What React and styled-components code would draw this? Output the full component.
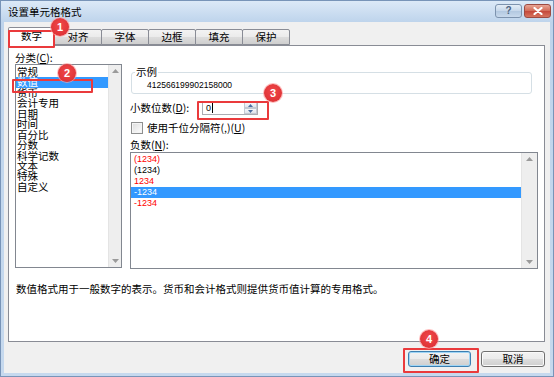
import React from "react";
import styled, { createGlobalStyle } from "styled-components";

const GlobalStyle = createGlobalStyle`
  html, body {
    margin: 0;
    padding: 0;
    background: #fff;
  }
  body {
    font-family: "Noto Sans CJK SC", "Liberation Sans", sans-serif;
    font-size: 10.5px;
    color: #000;
  }
`;

const Window = styled.div`
  position: relative;
  width: 554px;
  height: 377px;
  box-sizing: border-box;
  border: 1px solid #7894b8;
  background: linear-gradient(#dce9f7, #bed4ec 21px, #c6d9ee);
  display: flex;
  flex-direction: column;
`;

const TitleBar = styled.div`
  height: 21px;
  display: flex;
  align-items: center;
  padding: 0 2px 0 7px;
`;

const Title = styled.div`
  flex: 1;
  line-height: 22px;
  font-size: 10.5px;
`;

const CaptionButton = styled.div`
  width: 27px;
  height: 14px;
  box-sizing: border-box;
  border: 1px solid ${(p) => (p.$close ? "#9c4a42" : "#7d93ae")};
  border-radius: 3px;
  margin-left: 2px;
  margin-top: -2px;
  display: flex;
  align-items: center;
  justify-content: center;
  color: ${(p) => (p.$close ? "#fff" : "#4d6380")};
  font-family: "Liberation Sans", sans-serif;
  font-weight: bold;
  font-size: 10px;
  background: ${(p) =>
    p.$close
      ? "linear-gradient(#e8a595, #d26a56 50%, #c4473a 51%, #d6745e)"
      : "linear-gradient(#e4edf7, #c6d7ea 50%, #b2c8e0 51%, #c8d9ec)"};
`;

const Body = styled.div`
  flex: 1;
  margin: 0 3px 3px;
  background: #f0f0f0;
  padding: 5px 5px 0 4px;
  display: flex;
  flex-direction: column;
`;

const Tabs = styled.div`
  display: flex;
  align-items: flex-end;
  height: 18px;
`;

const Tab = styled.div`
  position: relative;
  z-index: ${(p) => (p.$active ? 2 : 1)};
  box-sizing: border-box;
  width: ${(p) => (p.$active ? 47 : 48)}px;
  height: ${(p) => (p.$active ? 19 : 16)}px;
  margin-left: ${(p) => (p.$active ? 0 : -1)}px;
  margin-bottom: ${(p) => (p.$active ? -1 : 0)}px;
  border: 1px solid #898c95;
  border-bottom: ${(p) => (p.$active ? "none" : "1px solid #898c95")};
  border-radius: 2px 2px 0 0;
  background: ${(p) =>
    p.$active ? "#fff" : "linear-gradient(#f3f3f3, #ebebeb 50%, #dddddd 51%, #cfcfcf)"};
  display: flex;
  align-items: center;
  justify-content: center;
  line-height: 12px;
  padding-bottom: ${(p) => (p.$active ? 2 : 0)}px;
`;

const Panel = styled.div`
  width: 537px;
  height: 297px;
  box-sizing: border-box;
  border: 1px solid #898c95;
  background: #fff;
  display: flex;
  flex-direction: column;
`;

const Top = styled.div`
  display: flex;
  gap: 9px;
  padding: 5px 6px 0 6px;
`;

const CategoryCol = styled.div`
  width: 106px;
  display: flex;
  flex-direction: column;
`;

const Label = styled.div`
  line-height: ${(p) => p.$lh || 13}px;
  height: ${(p) => p.$lh || 13}px;
  margin-top: ${(p) => p.$mt || 0}px;
  white-space: nowrap;
  width: ${(p) => (p.$w ? `${p.$w}px` : "auto")};
  flex-shrink: 0;
`;

const ListBox = styled.div`
  box-sizing: border-box;
  width: ${(p) => p.$w}px;
  height: ${(p) => p.$h}px;
  margin-top: ${(p) => p.$mt || 0}px;
  border: 1px solid #828790;
  display: flex;
  background: #fff;
`;

const Items = styled.div`
  flex: 1;
  padding-top: ${(p) => p.$pt}px;
`;

const Item = styled.div`
  line-height: ${(p) => p.$lh}px;
  height: ${(p) => p.$lh}px;
  padding-left: ${(p) => p.$pl}px;
  white-space: nowrap;
  font-family: ${(p) =>
    p.$num ? '"Liberation Sans", sans-serif' : '"Noto Sans CJK SC", sans-serif'};
  font-size: ${(p) => (p.$num ? "9px" : "10.5px")};
  color: ${(p) => (p.$selected ? "#fff" : p.$red ? "#ff0000" : "#000")};
  background: ${(p) => (p.$selected ? "#3399ff" : "transparent")};
`;

const ScrollBar = styled.div`
  width: ${(p) => p.$w}px;
  background: #eeeeee;
  border-left: 1px solid #e4e4e4;
  display: flex;
  flex-direction: column;
  justify-content: space-between;
  align-items: center;
  padding: 4px 0;
`;

const DetailCol = styled.div`
  width: 408px;
  display: flex;
  flex-direction: column;
`;

const GroupBox = styled.div`
  position: relative;
  box-sizing: border-box;
  width: 401px;
  height: 22px;
  margin: 21px 0 0 1px;
  border: 1px solid #d5dfe5;
  border-radius: 3px;
  padding: 6px 0 0 15px;
`;

const Legend = styled.span`
  position: absolute;
  top: -7px;
  left: 3px;
  padding: 0 1px;
  background: #fff;
  line-height: 12px;
`;

const SampleValue = styled.div`
  font-family: "Liberation Sans", sans-serif;
  font-size: 8.5px;
  line-height: 12px;
`;

const Row = styled.div`
  display: flex;
  align-items: center;
  margin-top: ${(p) => p.$mt}px;
  height: ${(p) => p.$h}px;
`;

const Spin = styled.div`
  width: 56px;
  height: 14px;
  box-sizing: border-box;
  border: 1px solid #abadb3;
  border-top-color: #8e9197;
  display: flex;
  margin-left: 1px;
`;

const SpinText = styled.div`
  flex: 1;
  font-family: "Liberation Sans", sans-serif;
  font-size: 9px;
  line-height: 12px;
  padding-left: 3px;
  display: flex;
  align-items: center;
`;

const Caret = styled.span`
  display: inline-block;
  width: 1px;
  height: 10px;
  background: #000;
  margin-left: 1px;
`;

const SpinButtons = styled.div`
  width: 13px;
  display: flex;
  flex-direction: column;
`;

const SpinHalf = styled.div`
  flex: 1;
  box-sizing: border-box;
  border: 1px solid #c3cad3;
  background: linear-gradient(#f6f8fb, #dfe5ed);
  display: flex;
  align-items: center;
  justify-content: center;
`;

const Check = styled.div`
  width: 12px;
  height: 12px;
  box-sizing: border-box;
  border: 1px solid #8e8f8f;
  margin-left: 1px;
  margin-right: 4px;
  background: linear-gradient(135deg, #dcdcdc, #f4f4f4 70%, #fff);
  box-shadow: inset 0 0 0 1px #f4f4f4;
`;

const Description = styled.div`
  margin-top: 13px;
  padding-left: 7px;
  line-height: 13px;
`;

const Footer = styled.div`
  display: flex;
  justify-content: flex-end;
  gap: 10px;
  margin-top: 9px;
`;

const Button = styled.div`
  width: ${(p) => p.$w}px;
  height: 16px;
  box-sizing: border-box;
  border: 1px solid ${(p) => (p.$default ? "#3c7fb1" : "#707070")};
  border-radius: 3px;
  background: linear-gradient(#f2f2f2, #ebebeb 50%, #dddddd 51%, #cfcfcf);
  box-shadow: ${(p) => (p.$default ? "inset 0 0 0 1px #9fd5f5" : "inset 0 0 0 1px #fafafa")};
  display: flex;
  align-items: center;
  justify-content: center;
  line-height: 12px;
`;

const Highlight = styled.div`
  position: absolute;
  box-sizing: border-box;
  left: ${(p) => p.$x}px;
  top: ${(p) => p.$y}px;
  width: ${(p) => p.$w}px;
  height: ${(p) => p.$h}px;
  border: 2px solid #ea3a3c;
  border-radius: 1px;
  pointer-events: none;
  z-index: 5;
`;

const Badge = styled.div`
  position: absolute;
  left: ${(p) => p.$cx - 9}px;
  top: ${(p) => p.$cy - 9}px;
  width: 18px;
  height: 18px;
  border-radius: 50%;
  background: radial-gradient(circle at 50% 40%, #f0484a, #d92b2f);
  box-shadow: 0 0 0 1px rgba(255, 160, 160, 0.7);
  color: #fff;
  font-family: "Liberation Sans", sans-serif;
  font-weight: bold;
  font-size: 11px;
  line-height: 18px;
  text-align: center;
  z-index: 6;
`;

const Arrow = ({ up, color = "#9a9a9a", w = 7, h = 4 }) => (
  <svg width={w} height={h} viewBox="0 0 7 4">
    <path d={up ? "M0 4 L3.5 0 L7 4 Z" : "M0 0 L3.5 4 L7 0 Z"} fill={color} />
  </svg>
);

const categories = [
  "常规",
  "数值",
  "货币",
  "会计专用",
  "日期",
  "时间",
  "百分比",
  "分数",
  "科学记数",
  "文本",
  "特殊",
  "自定义",
];

const negatives = [
  { text: "(1234)", red: true },
  { text: "(1234)" },
  { text: "1234", red: true },
  { text: "-1234", selected: true },
  { text: "-1234", red: true },
];

const tabs = ["数字", "对齐", "字体", "边框", "填充", "保护"];

const callouts = [
  { n: 1, box: [7, 29, 47, 18], badge: [59, 26] },
  { n: 2, box: [11, 78, 81, 14], badge: [66, 72] },
  { n: 3, box: [196, 100, 72, 19], badge: [272, 92] },
  { n: 4, box: [402, 347, 76, 25], badge: [428, 338] },
];

const App = () => {
  return (
    <>
      <GlobalStyle />
      <Window>
        <TitleBar>
          <Title>设置单元格格式</Title>
          <CaptionButton>?</CaptionButton>
          <CaptionButton $close>
            <svg width="10" height="8" viewBox="0 0 10 8">
              <path d="M1.5 1 L8.5 7 M8.5 1 L1.5 7" stroke="#fff" strokeWidth="2.2" strokeLinecap="round" />
            </svg>
          </CaptionButton>
        </TitleBar>
        <Body>
          <Tabs>
            {tabs.map((t, i) => (
              <Tab key={t} $active={i === 0}>
                {t}
              </Tab>
            ))}
          </Tabs>
          <Panel>
            <Top>
              <CategoryCol>
                <Label>
                  分类(<u>C</u>):
                </Label>
                <ListBox $w={107} $h={204}>
                  <Items $pt={2}>
                    {categories.map((c, i) => (
                      <Item key={c} $lh={10.45} $pl={1} $selected={i === 1}>
                        {c}
                      </Item>
                    ))}
                  </Items>
                  <ScrollBar $w={12}>
                    <Arrow up />
                    <Arrow />
                  </ScrollBar>
                </ListBox>
              </CategoryCol>
              <DetailCol>
                <GroupBox>
                  <Legend>示例</Legend>
                  <SampleValue>412566199902158000</SampleValue>
                </GroupBox>
                <Row $mt={7} $h={14}>
                  <Label $w={71} $lh={14}>
                    小数位数(<u>D</u>):
                  </Label>
                  <Spin>
                    <SpinText>
                      0<Caret />
                    </SpinText>
                    <SpinButtons>
                      <SpinHalf>
                        <Arrow up color="#4a6ea0" w={5} h={3} />
                      </SpinHalf>
                      <SpinHalf>
                        <Arrow color="#4a6ea0" w={5} h={3} />
                      </SpinHalf>
                    </SpinButtons>
                  </Spin>
                </Row>
                <Row $mt={7} $h={12}>
                  <Check />
                  <Label $lh={12}>
                    使用千位分隔符(,)(<u>U</u>)
                  </Label>
                </Row>
                <Label $lh={12} $mt={5}>
                  负数(<u>N</u>):
                </Label>
                <ListBox $w={408} $h={117} $mt={1}>
                  <Items $pt={1}>
                    {negatives.map((n, i) => (
                      <Item
                        key={i}
                        $num
                        $lh={11}
                        $pl={3}
                        $red={n.red}
                        $selected={n.selected}
                      >
                        {n.text}
                      </Item>
                    ))}
                  </Items>
                  <ScrollBar $w={15}>
                    <Arrow up />
                    <Arrow />
                  </ScrollBar>
                </ListBox>
              </DetailCol>
            </Top>
            <Description>
              数值格式用于一般数字的表示。货币和会计格式则提供货币值计算的专用格式。
            </Description>
          </Panel>
          <Footer>
            <Button $w={63} $default>
              确定
            </Button>
            <Button $w={64}>取消</Button>
          </Footer>
        </Body>
        {callouts.map((c) => (
          <React.Fragment key={c.n}>
            <Highlight $x={c.box[0]} $y={c.box[1]} $w={c.box[2]} $h={c.box[3]} />
            <Badge $cx={c.badge[0]} $cy={c.badge[1]}>
              {c.n}
            </Badge>
          </React.Fragment>
        ))}
      </Window>
    </>
  );
};

export default App;
